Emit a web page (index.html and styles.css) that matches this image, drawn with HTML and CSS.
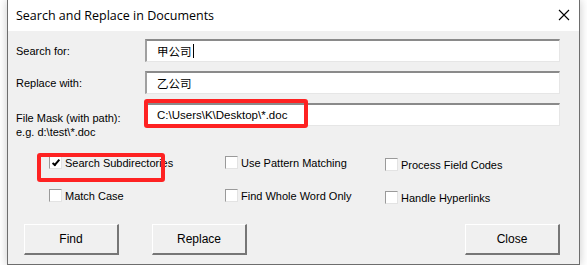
FILE: index.html
```html
<!DOCTYPE html>
<html lang="en">
<head>
  <meta charset="UTF-8">
  <meta name="viewport" content="width=device-width, initial-scale=1.0">
  <title>Search and Replace in Documents</title>
  <link rel="stylesheet" href="styles.css">
</head>
<body>
  <div class="window">
    <div class="titlebar">
      <span class="title">Search and Replace in Documents</span>
      <svg class="close-x" width="12" height="12" viewBox="0 0 12 12">
        <path d="M1 1 L11 11 M11 1 L1 11" stroke="#000" stroke-width="1.1" fill="none"/>
      </svg>
    </div>

    <div class="client">
      <div class="fields">
        <label class="field-label">Search for:</label>
        <div class="textbox">甲公司<span class="caret"></span></div>

        <label class="field-label">Replace with:</label>
        <div class="textbox">乙公司</div>

        <label class="field-label mask-label">File Mask (with path):<br>e.g. d:\test\*.doc</label>
        <div class="textbox">C:\Users\K\Desktop\*.doc</div>
      </div>

      <div class="options">
        <div class="option"><span class="box checked"></span>Search Subdirectories</div>
        <div class="option"><span class="box"></span>Use Pattern Matching</div>
        <div class="option low"><span class="box"></span>Process Field Codes</div>
        <div class="option"><span class="box"></span>Match Case</div>
        <div class="option"><span class="box"></span>Find Whole Word Only</div>
        <div class="option low"><span class="box"></span>Handle Hyperlinks</div>
      </div>

      <div class="buttons">
        <button class="btn">Find</button>
        <button class="btn">Replace</button>
        <button class="btn btn-close">Close</button>
      </div>

      <!-- red highlight marks drawn over the dialog -->
      <div class="mark mark-mask"></div>
      <div class="mark mark-subdir"></div>
    </div>
  </div>
</body>
</html>
```

FILE: styles.css
```css
body {
  margin: 0;
  background: #fff;
  font-family: "Liberation Sans", Arial, sans-serif;
  font-size: 11px;
  color: #000;
  overflow: hidden;
}
.window {
  margin-left: 7px;
  width: 573px;
  height: 265px;
  box-sizing: border-box;
  border: 1px solid #6d6d6d;
  border-top: 0;
  background: #f0f0f0;
  box-shadow: 0 0 9px rgba(0,0,0,0.22);
}
.titlebar {
  height: 31px;
  background: #fff;
  display: flex;
  align-items: center;
  justify-content: space-between;
  padding: 0 9px 0 8px;
}
.title {
  font-family: "Open Sans", "Noto Sans", sans-serif;
  font-size: 12.5px;
  color: #000;
  margin-top: -1px;
}
.close-x {
  margin-top: -1px;
}
.client {
  position: relative;
  padding: 8px 19px 0 8px;
}
.fields {
  display: grid;
  grid-template-columns: 129px 1fr;
  row-gap: 9px;
}
.field-label {
  display: flex;
  align-items: center;
  height: 23px;
}
.mask-label {
  align-items: flex-start;
  box-sizing: border-box;
  line-height: 14px;
  padding-top: 8px;
  white-space: nowrap;
}
.textbox {
  height: 23px;
  box-sizing: border-box;
  background: #fff;
  border-style: solid;
  border-width: 2px 1px 1px 2px;
  border-color: #8a8a8a #e6e6e6 #e6e6e6 #a0a0a0;
  padding-left: 10px;
  display: flex;
  align-items: center;
  font-family: "Liberation Sans", "Noto Sans CJK SC", sans-serif;
  font-size: 11.5px;
}
.caret {
  display: inline-block;
  width: 1px;
  height: 14px;
  background: #000;
  margin-left: 1px;
}
.options {
  display: grid;
  grid-template-columns: 176px 160px 1fr;
  row-gap: 18px;
  padding: 30px 0 0 33px;
}
.option {
  display: flex;
  align-items: center;
  height: 13px;
  white-space: nowrap;
}
.option.low {
  margin-top: 2px;
}
.box {
  width: 13px;
  height: 13px;
  box-sizing: border-box;
  background: #fff;
  border: 1px solid;
  border-color: #9a9a9a #e3e3e3 #e3e3e3 #9a9a9a;
  margin-right: 3px;
  position: relative;
}
.box.checked::after {
  content: "";
  position: absolute;
  left: 4px;
  top: 1px;
  width: 2px;
  height: 6px;
  border: solid #000;
  border-width: 0 2px 2px 0;
  transform: rotate(40deg);
}
.buttons {
  display: flex;
  gap: 33px;
  padding: 20px 0 0 8px;
}
.btn {
  width: 95px;
  height: 31px;
  box-sizing: border-box;
  background: #f0f0f0;
  font-family: "Liberation Sans", Arial, sans-serif;
  font-size: 12px;
  color: #000;
  border-style: solid;
  border-width: 1px 2px 2px 1px;
  border-color: #fff #767676 #767676 #fff;
  padding: 0;
}
.btn-close {
  margin-left: auto;
}
.mark {
  position: absolute;
  border: 4px solid #fe2222;
  border-radius: 3px;
}
.mark-mask {
  left: 136px;
  top: 68px;
  width: 156px;
  height: 21px;
}
.mark-subdir {
  left: 29px;
  top: 122px;
  width: 120px;
  height: 21px;
}
```
